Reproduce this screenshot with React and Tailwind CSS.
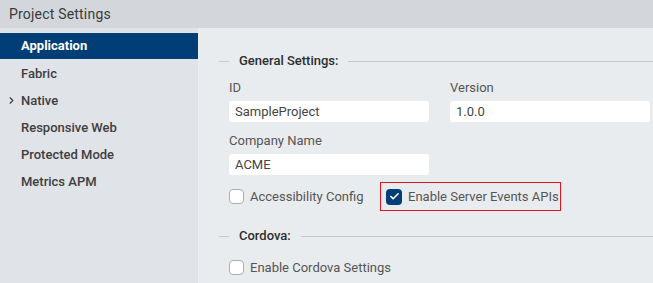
import { Check, ChevronRight } from "lucide-react";

const navItems = [
  { label: "Application", active: true },
  { label: "Fabric" },
  { label: "Native", expandable: true },
  { label: "Responsive Web" },
  { label: "Protected Mode" },
  { label: "Metrics APM" },
];

function Legend({ title }) {
  return (
    <div className="flex items-center h-[16px]">
      <div className="w-[10px] h-px bg-[#c5c9ce]" />
      <span className="px-[10px] text-[13px] font-medium text-[#2e2e2e]">{title}</span>
      <div className="flex-1 h-px bg-[#c5c9ce]" />
    </div>
  );
}

function Field({ label, value }) {
  return (
    <div className="flex flex-col w-[200px]">
      <label className="text-[13px] text-[#555] leading-[15px]">{label}</label>
      <div className="mt-[6px] h-[21px] bg-white rounded-[3px] flex items-center px-[6px] text-[13px] text-[#444]">
        {value}
      </div>
    </div>
  );
}

function Checkbox({ label, checked }) {
  return (
    <div className="flex items-center gap-[6px]">
      {checked ? (
        <div className="w-[16px] h-[16px] rounded-[4px] bg-[#003e78] flex items-center justify-center">
          <Check size={11} strokeWidth={3.5} color="white" />
        </div>
      ) : (
        <div className="w-[15px] h-[15px] rounded-[4px] bg-white border border-[#a9aeb4]" />
      )}
      <span className="text-[13px] text-[#555]">{label}</span>
    </div>
  );
}

export default function App() {
  return (
    <div className="w-[653px] h-[283px] flex flex-col font-['Roboto',sans-serif] overflow-hidden">
      <div className="h-[28px] bg-[#d3d6db] pl-[9px] flex items-center text-[14px] tracking-[0.2px] text-[#3a3a3a]">
        Project Settings
      </div>
      <div className="flex flex-1">
        <div className="w-[199px] bg-[#e0e3e7] border-r border-[#edf0f2] pt-[5px]">
          {navItems.map((item) =>
            item.active ? (
              <div
                key={item.label}
                className="h-[26px] mb-px bg-[#003e78] text-white font-bold text-[13px] flex items-center pl-[21px]"
              >
                {item.label}
              </div>
            ) : (
              <div
                key={item.label}
                className="relative h-[27px] text-[#3e3e3e] font-medium text-[13px] flex items-center pl-[21px]"
              >
                {item.expandable && (
                  <ChevronRight size={11} strokeWidth={2.5} className="absolute left-[6px] top-[8px]" />
                )}
                {item.label}
              </div>
            )
          )}
        </div>
        <div className="flex-1 bg-[#e9ecef] pl-[20px] pt-[25px]">
          <Legend title="General Settings:" />
          <div className="pl-[10px] pt-[11px]">
            <div className="flex gap-[21px]">
              <Field label="ID" value="SampleProject" />
              <Field label="Version" value="1.0.0" />
            </div>
            <div className="mt-[11px]">
              <Field label="Company Name" value="ACME" />
            </div>
            <div className="flex items-center mt-[7px] h-[29px]">
              <div className="w-[151px]">
                <Checkbox label="Accessibility Config" />
              </div>
              <div className="h-[29px] w-[181px] border border-[#e0161e] flex items-center pl-[5px]">
                <Checkbox label="Enable Server Events APIs" checked />
              </div>
            </div>
          </div>
          <div className="mt-[17px]">
            <Legend title="Cordova:" />
          </div>
          <div className="pl-[10px] mt-[14px]">
            <Checkbox label="Enable Cordova Settings" />
          </div>
        </div>
      </div>
    </div>
  );
}
